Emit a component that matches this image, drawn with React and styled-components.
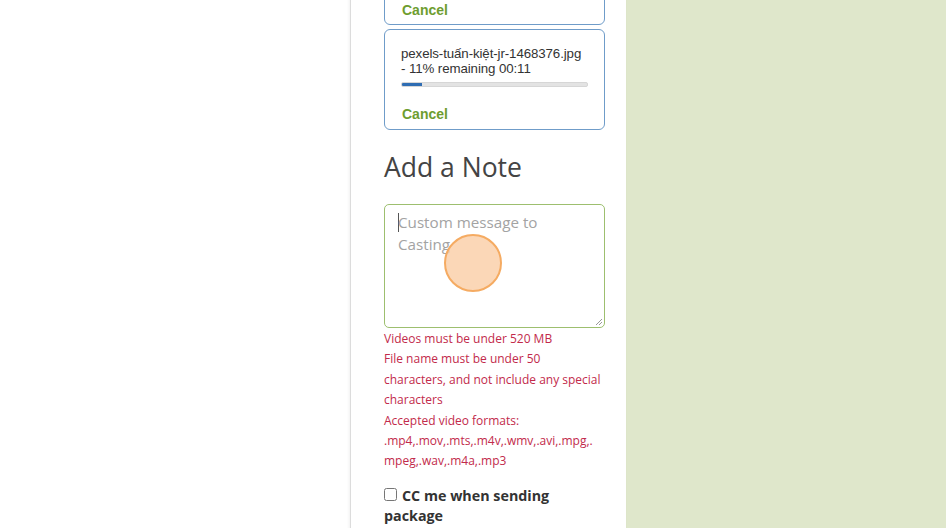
import React from 'react'
import styled, { createGlobalStyle } from 'styled-components'

const GlobalStyle = createGlobalStyle`
    html, body {
        margin: 0;
        padding: 0;
        background: #ffffff;
        overflow: hidden;
    }
`

const Page = styled.div`
    display: flex;
    flex-direction: row;
    width: 946px;
    height: 528px;
    overflow: hidden;
`

const Blank = styled.div`
    width: 350px;
    background: #ffffff;
`

const Panel = styled.div`
    width: 276px;
    min-height: 580px;
    background: #ffffff;
    border-left: 1px solid #dcdcdc;
    box-shadow: -1px 0 3px rgba(0,0,0,0.06);
    padding: 0 21px 0 33px;
    box-sizing: border-box;
    display: flex;
    flex-direction: column;
    margin-top: -16px;
    position: relative;
`

const Side = styled.div`
    flex: 1;
    background: #dfe7cb;
`

const UploadCard = styled.div`
    border: 1px solid #6f9cc9;
    border-radius: 6px;
    padding: ${p => p.$pad || '16px 16px 7px 16px'};
    margin-bottom: 4px;
    font-family: "Liberation Sans", Arial, sans-serif;
    color: #333;
`

const FileName = styled.div`
    font-size: 13.3px;
    line-height: 15px;
    letter-spacing: -0.1px;
`

const Track = styled.div`
    height: 3px;
    margin-top: 6px;
    background: #e3e3e3;
    border: 1px solid #d6d6d6;
    border-radius: 2px;
    overflow: hidden;
`

const Fill = styled.div`
    height: 100%;
    background: #2f6db3;
`

const CancelLink = styled.div`
    margin-top: ${p => p.$top || '19px'};
    padding-left: 1px;
    font-weight: bold;
    font-size: 14px;
    line-height: 16px;
    color: #6e9d2f;
`

const Heading = styled.h2`
    margin: 14px 0 0;
    font-family: "Open Sans", sans-serif;
    font-weight: 400;
    font-size: 26.5px;
    line-height: 38px;
    color: #444;
`

const NoteBox = styled.div`
    position: relative;
    margin-top: 18px;
    height: 124px;
    border: 1px solid #9dbf6f;
    border-radius: 5px;
    padding: 6px 13px;
    box-sizing: border-box;
    font-family: "Open Sans", sans-serif;
    font-size: 15.2px;
    line-height: 22px;
    color: #a3a3a3;
`

const Caret = styled.span`
    display: inline-block;
    width: 1px;
    height: 19px;
    background: #555;
    vertical-align: -4px;
    margin-right: -1px;
`

const Grip = styled.svg`
    position: absolute;
    right: 1px;
    bottom: 1px;
`

const ClickMark = styled.div`
    position: absolute;
    left: 59px;
    top: 29px;
    width: 58px;
    height: 58px;
    border-radius: 50%;
    background: rgba(250, 205, 165, 0.8);
    border: 2px solid #f5ab62;
    box-sizing: border-box;
`

const Errors = styled.div`
    margin-top: 1px;
    font-family: "Open Sans", sans-serif;
    font-size: 12px;
    line-height: 20.4px;
    color: #c22a4b;
    overflow-wrap: anywhere;
`

const CheckRow = styled.label`
    display: block;
    margin-top: 14px;
    font-family: "Open Sans", sans-serif;
    font-weight: bold;
    font-size: 14.3px;
    line-height: 20px;
    color: #333;

    input {
        margin: 0 5px 0 0;
        width: 13px;
        height: 13px;
        vertical-align: 0;
    }
`

const App = () => {
  return (
    <Page>
      <GlobalStyle />
      <Blank />
      <Panel>
        <UploadCard $pad="0 16px 6px 16px">
          <CancelLink $top="17px">Cancel</CancelLink>
        </UploadCard>
        <UploadCard>
          <FileName>pexels-tuấn-kiệt-jr-1468376.jpg<br />- 11% remaining 00:11</FileName>
          <Track><Fill style={{ width: '11%' }} /></Track>
          <CancelLink>Cancel</CancelLink>
        </UploadCard>
        <Heading>Add a Note</Heading>
        <NoteBox>
          <Caret />Custom message to<br />Casting
          <ClickMark />
          <Grip width="9" height="9" viewBox="0 0 9 9">
            <path d="M8 2 L2 8 M8 5 L5 8" stroke="#999" strokeWidth="1" />
          </Grip>
        </NoteBox>
        <Errors>
          Videos must be under 520 MB<br />
          File name must be under 50 characters, and not include any special characters<br />
          Accepted video formats: .mp4,.mov,.mts,.m4v,.wmv,.avi,.mpg,.<wbr />mpeg,.wav,.m4a,.mp3
        </Errors>
        <CheckRow>
          <input type="checkbox" />CC me when sending package
        </CheckRow>
      </Panel>
      <Side />
    </Page>
  )
}

export default App
